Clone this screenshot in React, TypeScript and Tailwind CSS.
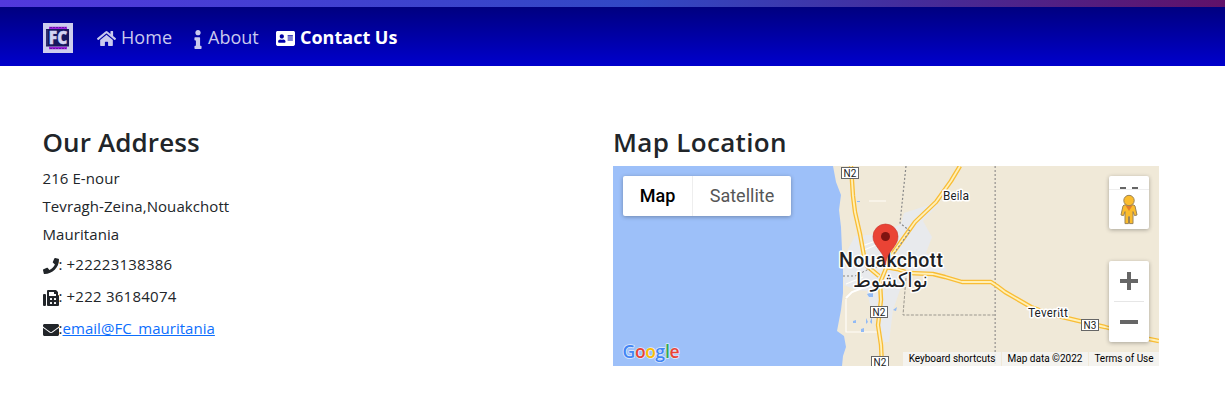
import type { ReactNode } from 'react';
import { FaHome, FaInfo, FaAddressCard, FaFax, FaEnvelope, FaPhone } from 'react-icons/fa';

const COAST =
  '833,166 836,182 841,195 839,210 841,227 842,250 843,262 843,293 841,310 837,331 844,336 846,347 843,356 842,366';

const ROADS = [
  '851,166 853,196 855,212 860,234 864,256 867,266 879,276',
  '960,166 951,181 936,202 915,222 893,253 887,266 880,283 881,300 878,325 881,345 882,366',
  '886,267 897,269 909,273 933,274 945,277 962,282 975,282 991,282 997,286 1005,292 1031,307 1050,314 1075,320 1105,327 1149,339 1159,341',
];

const GOOGLE = [
  [622.5, 'G', '#4285f4'],
  [635, 'o', '#ea4335'],
  [645.2, 'o', '#fbbc04'],
  [655.2, 'g', '#4285f4'],
  [665, 'l', '#34a853'],
  [669.5, 'e', '#ea4335'],
] as const;

function MapArt() {
  return (
    <svg className="block h-[200px] w-[546px]" viewBox="613 166 546 200" fontFamily="Roboto, sans-serif">
      <rect x="613" y="166" width="546" height="200" fill="#f0e9d8" />
      <polygon
        points="843,262 848,249 855,236 880,234 901,224 904,213 932,204 938,205 923,221 932,237 926,253 942,262 947,270 930,274 906,276 900,290 893,310 889,342 884,342 880,326 878,312 870,305 867,291 856,290 844,285"
        fill="#e8eaed"
      />
      <polygon points={`613,166 ${COAST} 613,366`} fill="#9dc0f9" />
      <path d="M846 284l17-7M846 299v33h32M864 250l17-7M862 246l19-7M869 201h17" stroke="#fffdf8" strokeWidth="1.2" fill="none" />
      <path d="M846 298l6-6 26-10" stroke="#fff" strokeWidth="2" fill="none" />
      <path
        d="M867 294l6-2v5h-4zM853 321l3-1v3h-3zM866 318l2 4-2 2zM870 322l2-5v7zM861 329l3-1v4h-3zM893 310l4-3-1 4zM857 201h3v1h-3z"
        fill="#91baf6"
      />
      <path d="M843 276h12l16-8" fill="none" stroke="#888" strokeWidth="1" strokeDasharray="2 2" />
      <path d="M906 278l-3 37h92" fill="none" stroke="#9b978e" strokeWidth="1" strokeDasharray="3 1.5" />
      <path d="M995.2 166v200" stroke="#aaa6a0" strokeWidth="1.6" strokeDasharray="2 2" />
      {ROADS.map((p) => (
        <polyline key={p} points={p} fill="none" stroke="#f9bd35" strokeWidth="4.4" strokeLinejoin="round" />
      ))}
      {ROADS.map((p) => (
        <polyline key={p} points={p} fill="none" stroke="#fff0b8" strokeWidth="1.8" strokeLinejoin="round" />
      ))}
      <path d="M906 166l-6 57 10 8-23 32-18 7" fill="none" stroke="#888" strokeWidth="1.2" strokeDasharray="2 2" />
      {[
        [841.5, 167.5, 'N2'],
        [870.5, 306.5, 'N2'],
        [871.5, 356.5, 'N2'],
        [1081.5, 319.5, 'N3'],
      ].map(([x, y, label]) => (
        <g key={`${x}-${y}`}>
          <rect x={Number(x)} y={Number(y)} width="17" height="11" fill="#fff" stroke="#666" />
          <text x={Number(x) + 8.5} y={Number(y) + 9.2} textAnchor="middle" fontSize="10" fill="#222">
            {label}
          </text>
        </g>
      ))}
      <g stroke="#fff" strokeWidth="3" strokeLinejoin="round" paintOrder="stroke" fill="#202124">
        <text x="943" y="200" fontSize="12" textLength="26">Beila</text>
        <text x="1028" y="317" fontSize="12" textLength="40">Teveritt</text>
        <text x="839" y="267" fontSize="19.5" fontWeight="500" textLength="104">Nouakchott</text>
        <text x="890.5" y="287" fontSize="20" textAnchor="middle" fontFamily="'DejaVu Sans', sans-serif" textLength="75" lengthAdjust="spacingAndGlyphs">
          نواكشوط
        </text>
      </g>
      <path
        d="M885.5 265c-1-9-3.8-11.5-7.3-16.5-3.4-4.8-5.2-7.4-5.2-12a12.5 12.5 0 0 1 25 0c0 4.600-1.800 7.200-5.200 12-3.500 5-6.300 7.500-7.300 16.500z"
        fill="#ea4335"
        stroke="#c5352b"
        strokeWidth="0.6"
      />
      <circle cx="885.5" cy="236.500" r="4.500" fill="#811411" />
      <text y="358" fontFamily="'Open Sans', sans-serif" fontSize="17.5" fontWeight="600" stroke="#dfeafc" strokeWidth="1.6" strokeLinejoin="round" paintOrder="stroke">
        {GOOGLE.map(([x, letter, color]) => (
          <tspan key={x} x={x} fill={color}>
            {letter}
          </tspan>
        ))}
      </text>
    </svg>
  );
}

function Pegman() {
  return (
    <svg className="h-8 w-5" viewBox="0 0 20 32">
      <path d="M5 11h10l1 1 2 9-2.500.600-1.500-4v12h-3.500v-7h-1v7H6v-12l-1.500 4L2 21l2-9z" fill="#fbbc2d" stroke="#9a8358" strokeWidth="1" />
      <path d="M6.500 11.500h7L10 17z" fill="#e37e2c" />
      <circle cx="10" cy="6.500" r="5.200" fill="#fbbc2d" stroke="#9a8358" strokeWidth="1" />
    </svg>
  );
}

function Logo() {
  return (
    <svg className="mt-[2px] h-[30px] w-[30px]" viewBox="0 0 30 30">
      <rect width="30" height="30" fill="#ccccee" />
      <path d="M6 5h18M6 25h18" stroke="#9a20dc" strokeWidth="2.500" />
      <path d="M7 4.500h16M7 25.500h16" stroke="#6710a8" strokeWidth="1" strokeDasharray="2 1" />
      <rect x="3" y="6" width="23" height="17.500" fill="#17175e" />
      <path d="M4 7v15.500" stroke="#55558c" strokeWidth="0.700" />
      <text x="15" y="21" textAnchor="middle" fontSize="17.500" fontWeight="800" fontFamily="'Open Sans', sans-serif" textLength="18.500" lengthAdjust="spacingAndGlyphs" fill="#d3d3f3" stroke="#d3d3f3" strokeWidth="0.4">
        FC
      </text>
    </svg>
  );
}

function ContactRow({ icon, children }: { icon: ReactNode; children: ReactNode }) {
  return (
    <div className="flex h-8 items-center">
      <span className="mt-[3px] w-4 shrink-0 text-[16px]">{icon}</span>
      <span className="whitespace-pre">{children}</span>
    </div>
  );
}

export default function App() {
  return (
    <div className="h-[410px] w-full overflow-hidden bg-white font-['Open_Sans','Noto_Sans',sans-serif] text-[#212529]">
      <div className="h-[7px] bg-[linear-gradient(90deg,#5238dc_0%,#3148c5_52%,#432e9e_73%,#601169_100%)]" />
      <nav className="flex h-[59px] items-center bg-linear-to-b from-[#000080] to-[#0000cd] pl-[43px] text-[18px] leading-none text-[#c9c9ee]">
        <Logo />
        <a className="ml-6 flex w-[96px] items-center">
          <FaHome className="mt-1 h-[17px] w-[19px]" />
          <span className="ml-[5px] tracking-[0.1px]">Home</span>
        </a>
        <a className="flex w-[83px] items-center">
          <FaInfo className="mt-[5px] h-[19px] w-[10px]" />
          <span className="ml-[5px]">About</span>
        </a>
        <a className="flex items-center font-bold text-white">
          <FaAddressCard className="mt-1 h-[17px] w-[19px]" />
          <span className="ml-[5px]">Contact Us</span>
        </a>
      </nav>
      <main className="flex pl-[42.5px] pt-[59px]">
        <section className="w-[570.5px]">
          <h2 className="h-[39px] text-[26px] font-semibold leading-[34px] tracking-[0.12px]">Our Address</h2>
          <address className="text-[15px] not-italic leading-7 tracking-[0.08px]">
            <div>216 E-nour</div>
            <div>Tevragh-Zeina,Nouakchott</div>
            <div>Mauritania</div>
            <ContactRow icon={<FaPhone />}>
              : <span className="tracking-[0.25px]">+22223138386</span>
            </ContactRow>
            <ContactRow icon={<FaFax />}>
              : <span className="tracking-[0.25px]">+222 36184074</span>
            </ContactRow>
            <ContactRow icon={<FaEnvelope />}>
              :<a className="tracking-[0.03px] text-[#0d6efd] underline">email@FC_mauritania</a>
            </ContactRow>
          </address>
        </section>
        <section className="w-[546px]">
          <h2 className="h-[41px] text-[26px] font-semibold leading-[34px] tracking-[0.32px]">Map Location</h2>
          <div className="relative h-[200px] w-[546px] overflow-hidden font-[Roboto,sans-serif]">
            <MapArt />
            <div className="absolute left-[10px] top-[10px] flex h-10 items-center rounded-[2px] bg-white text-[18px] shadow-[0_1px_4px_rgba(0,0,0,0.3)]">
              <span className="flex h-10 w-[70px] items-center justify-center border-r border-[#eee] pb-px font-medium text-black">Map</span>
              <span className="flex h-10 w-[98px] items-center justify-center pb-px text-[#565656]">Satellite</span>
            </div>
            <div className="absolute left-[496px] top-[10px] flex h-[53px] w-10 flex-col rounded-[2px] bg-white shadow-[0_1px_4px_rgba(0,0,0,0.3)]">
              <div className="flex h-[14px] items-end justify-center gap-[6px] border-b border-[#eee]">
                <span className="h-[2px] w-[6px] bg-[#666]" />
                <span className="h-[2px] w-[6px] bg-[#666]" />
              </div>
              <div className="flex h-[39px] items-center justify-center">
                <Pegman />
              </div>
            </div>
            <div className="absolute left-[496px] top-[95px] flex h-[81px] w-10 flex-col items-center rounded-[2px] bg-white shadow-[0_1px_4px_rgba(0,0,0,0.3)]">
              <svg className="h-10 w-10" viewBox="0 0 40 40">
                <path d="M11 20h18M20 11v18" stroke="#666" strokeWidth="4" />
              </svg>
              <span className="h-px w-[30px] bg-[#e6e6e6]" />
              <svg className="h-10 w-10" viewBox="0 0 40 40">
                <path d="M11 20h18" stroke="#666" strokeWidth="4" />
              </svg>
            </div>
            <div className="absolute bottom-0 right-0 flex h-[14px] gap-px whitespace-nowrap text-[10px] leading-[14px] text-black">
              <span className="w-[98px] bg-[#f5f5f5]/80 text-center">Keyboard shortcuts</span>
              <span className="w-[86px] bg-[#f5f5f5]/80 text-center">Map data ©2022</span>
              <span className="w-[70px] bg-[#f5f5f5]/80 text-center">Terms of Use</span>
            </div>
          </div>
        </section>
      </main>
    </div>
  );
}
